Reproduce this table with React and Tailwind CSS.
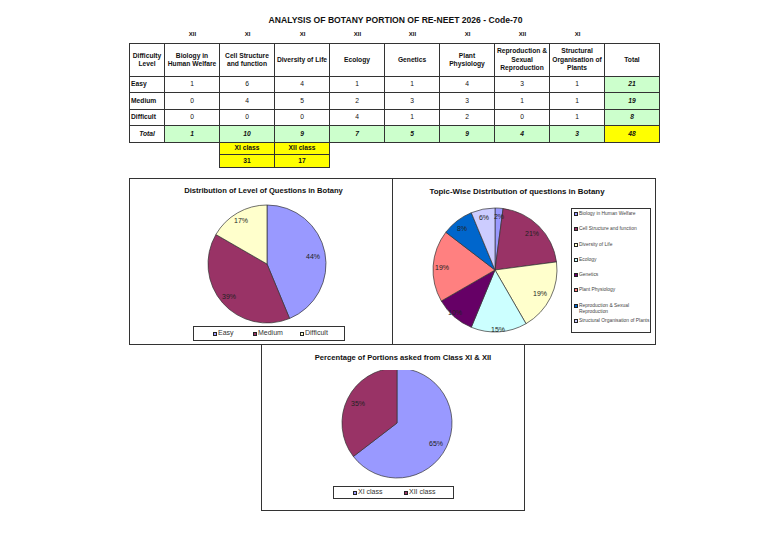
import React from 'react'

// topics in column order — class tag, easy / medium / difficult counts
const TOPICS = [
  { name: ['Biology in', 'Human Welfare'], cls: 'XII', e: 1, m: 0, d: 0, t: 1 },
  { name: ['Cell Structure', 'and function'], cls: 'XI', e: 6, m: 4, d: 0, t: 10 },
  { name: ['Diversity of Life'], cls: 'XI', e: 4, m: 5, d: 0, t: 9 },
  { name: ['Ecology'], cls: 'XII', e: 1, m: 2, d: 4, t: 7 },
  { name: ['Genetics'], cls: 'XII', e: 1, m: 3, d: 1, t: 5 },
  { name: ['Plant', 'Physiology'], cls: 'XI', e: 4, m: 3, d: 2, t: 9 },
  { name: ['Reproduction &', 'Sexual', 'Reproduction'], cls: 'XII', e: 3, m: 1, d: 0, t: 4 },
  { name: ['Structural', 'Organisation of', 'Plants'], cls: 'XI', e: 1, m: 1, d: 1, t: 3 },
]

const FONT = { fontFamily: '"Liberation Sans", Arial, sans-serif' }

const C = {
  blue: '#9999FF',
  maroon: '#993366',
  cream: '#FFFFCC',
  cyan: '#CCFFFF',
  purple: '#660066',
  salmon: '#FF8080',
  royal: '#0066CC',
  lav: '#CCCCFF',
}

// pie slices, start at 12 o'clock and run clockwise (as Excel draws them)
function Pie({ cx, cy, r, slices }) {
  const total = slices.reduce((s, x) => s + x.v, 0)
  let acc = 0
  return slices.map((s, i) => {
    const a0 = (acc / total) * Math.PI * 2
    acc += s.v
    const a1 = (acc / total) * Math.PI * 2
    const x0 = cx + r * Math.sin(a0)
    const y0 = cy - r * Math.cos(a0)
    const x1 = cx + r * Math.sin(a1)
    const y1 = cy - r * Math.cos(a1)
    const large = a1 - a0 > Math.PI ? 1 : 0
    return (
      <path
        key={i}
        d={`M${cx} ${cy} L${x0} ${y0} A${r} ${r} 0 ${large} 1 ${x1} ${y1} Z`}
        fill={s.color}
        stroke="#333"
        strokeWidth="0.7"
      />
    )
  })
}

function Labels({ items }) {
  return items.map(([txt, x, y], i) => (
    <text key={i} x={x} y={y} textAnchor="middle" dominantBaseline="central" fontSize="7" fill="#222" style={FONT}>
      {txt}
    </text>
  ))
}

function Marker({ color }) {
  return <span className="inline-block w-[4px] h-[4px] border border-[#222] shrink-0" style={{ background: color }} />
}

function Cell({ children, className = '' }) {
  return (
    <div className={`border-r border-b border-[#333] flex items-center justify-center text-center ${className}`}>
      {children}
    </div>
  )
}

export default function App() {
  return (
    <div className="w-[768px] h-[543px] bg-white overflow-hidden text-[#111]" style={FONT}>
      <div className="ml-[129px] w-[531px]">
        {/* title */}
        <div className="pt-[14px] h-[26px] flex items-center justify-center text-[8.6px] font-bold leading-none pl-[2px]">
          ANALYSIS OF BOTANY PORTION OF RE-NEET 2026 - Code-70
        </div>

        {/* class tags above each topic */}
        <div className="grid grid-cols-[36px_repeat(9,55px)] h-[17px] text-[6px] font-bold">
          <div />
          {TOPICS.map((t, i) => (
            <div key={i} className="flex items-center justify-center">{t.cls}</div>
          ))}
          <div />
        </div>

        {/* main table */}
        <div className="grid grid-cols-[35px_repeat(9,55px)] border-l border-t border-[#333] text-[6.7px] w-[531px]">
          <Cell className="h-[33px] font-bold leading-[8.5px]">Difficulty<br />Level</Cell>
          {TOPICS.map((t, i) => (
            <Cell key={i} className="h-[33px] font-bold leading-[8.5px]">
              <div>
                {t.name.map((l, j) => <div key={j}>{l}</div>)}
              </div>
            </Cell>
          ))}
          <Cell className="h-[33px] font-bold">Total</Cell>

          {[
            ['Easy', 'e', 21],
            ['Medium', 'm', 19],
            ['Difficult', 'd', 8],
          ].map(([label, k, tot], r) => (
            <React.Fragment key={label}>
              <Cell className={`${r === 1 ? 'h-[17px]' : 'h-[16px]'} !justify-start pl-[1px] font-bold`}>{label}</Cell>
              {TOPICS.map((t, i) => (
                <Cell key={i} className={r === 1 ? 'h-[17px]' : 'h-[16px]'}>{t[k]}</Cell>
              ))}
              <Cell className={`${r === 1 ? 'h-[17px]' : 'h-[16px]'} bg-[#CCFFCC] font-bold italic`}>{tot}</Cell>
            </React.Fragment>
          ))}

          <Cell className="h-[17px] font-bold italic">Total</Cell>
          {TOPICS.map((t, i) => (
            <Cell key={i} className="h-[17px] bg-[#CCFFCC] font-bold italic">{t.t}</Cell>
          ))}
          <Cell className="h-[17px] bg-[#FFFF00] font-bold italic">48</Cell>
        </div>

        {/* XI / XII class split */}
        <div className="ml-[90px] w-[111px] grid grid-cols-[55px_55px] border-l border-[#333] text-[6.7px] font-bold">
          <Cell className="h-[12px] bg-[#FFFF00]">XI class</Cell>
          <Cell className="h-[12px] bg-[#FFFF00]">XII class</Cell>
          <Cell className="h-[13px] bg-[#FFFF00]">31</Cell>
          <Cell className="h-[13px] bg-[#FFFF00]">17</Cell>
        </div>

        {/* charts row */}
        <div className="mt-[10px] flex">
          {/* level distribution */}
          <div className="w-[264px] h-[167px] border border-[#333] flex flex-col">
            <div className="h-[23px] flex items-center justify-center pl-[5px] text-[7.6px] font-bold">
              Distribution of Level of Questions in Botany
            </div>
            <svg width="262" height="123" viewBox="0 24 262 123">
              <Pie cx={137} cy={86} r={59} slices={[
                { v: 21, color: C.blue },
                { v: 19, color: C.maroon },
                { v: 8, color: C.cream },
              ]} />
              <Labels items={[['44%', 183, 78], ['39%', 99, 118], ['17%', 111, 42]]} />
            </svg>
            <div className="ml-[63px] mt-[1px] w-[152px] h-[15px] border border-[#333] flex items-center pl-[19px] text-[7px] text-[#333]">
              <div className="w-[40px] flex items-center gap-[1px]"><Marker color={C.blue} />Easy</div>
              <div className="w-[47px] flex items-center gap-[1px]"><Marker color={C.maroon} />Medium</div>
              <div className="flex items-center gap-[1px]"><Marker color={C.cream} />Difficult</div>
            </div>
          </div>

          {/* topic distribution */}
          <div className="-ml-px w-[264px] h-[167px] border border-[#333] flex flex-col">
            <div className="h-[25px] flex items-center justify-center pr-[14px] text-[7.9px] font-bold">
              Topic-Wise Distribution of questions in Botany
            </div>
            <div className="flex">
              <svg width="178" height="130" viewBox="0 26 178 130">
                <Pie cx={102} cy={92} r={62} slices={[
                  { v: 1, color: C.blue },
                  { v: 10, color: C.maroon },
                  { v: 9, color: C.cream },
                  { v: 7, color: C.cyan },
                  { v: 5, color: C.purple },
                  { v: 9, color: C.salmon },
                  { v: 4, color: C.royal },
                  { v: 3, color: C.lav },
                ]} />
                <Labels items={[
                  ['2%', 106, 38], ['21%', 139, 55], ['19%', 147, 115], ['15%', 105, 151],
                  ['10%', 62, 134], ['19%', 49, 89], ['8%', 69, 50], ['6%', 91, 39],
                ]} />
              </svg>
              <div className="mt-[4px] w-[80px] h-[125px] border border-[#333] pt-[2px] text-[4.9px] leading-[6px] text-[#444]">
                {[
                  [C.blue, 'Biology in Human Welfare'],
                  [C.maroon, 'Cell Structure and function'],
                  [C.cream, 'Diversity of Life'],
                  [C.cyan, 'Ecology'],
                  [C.purple, 'Genetics'],
                  [C.salmon, 'Plant Physiology'],
                  [C.royal, 'Reproduction & Sexual Reproduction'],
                  [C.lav, 'Structural Organisation of Plants'],
                ].map(([c, l]) => (
                  <div key={l} className="h-[15.3px] flex items-start gap-[1px] pl-[2px]">
                    <span className="mt-[1px]"><Marker color={c} /></span>
                    <span className="w-[72px]">{l}</span>
                  </div>
                ))}
              </div>
            </div>
          </div>
        </div>

        {/* class split chart */}
        <div className="ml-[132px] -mt-px w-[264px] h-[167px] border border-[#333] flex flex-col">
          <div className="h-[25px] flex items-center justify-center pl-[20px] text-[7.6px] font-bold">
            Percentage of Portions asked from Class XI &amp; XII
          </div>
          <svg width="262" height="116" viewBox="0 25 262 116">
            <Pie cx={135} cy={78} r={55} slices={[
              { v: 31, color: C.blue },
              { v: 17, color: C.maroon },
            ]} />
            <Labels items={[['35%', 96, 58], ['65%', 174, 98]]} />
          </svg>
          <div className="ml-[71px] w-[121px] h-[13px] border border-[#333] flex items-center pl-[19px] text-[7px] text-[#333]">
            <div className="w-[51px] flex items-center gap-[1px]"><Marker color={C.blue} />XI class</div>
            <div className="flex items-center gap-[1px]"><Marker color={C.maroon} />XII class</div>
          </div>
        </div>
      </div>
    </div>
  )
}
